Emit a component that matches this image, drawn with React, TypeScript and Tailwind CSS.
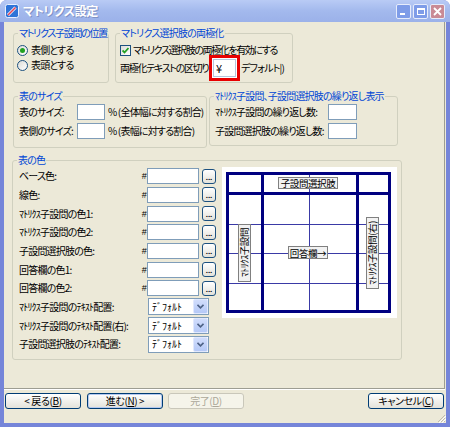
import React from 'react';

// 共通フォント（MS UI Gothic 風にプロポーショナルかなを使う）
const jp = "font-['Noto_Sans_CJK_JP',sans-serif] [font-feature-settings:'palt']";

function GroupBox({ title, titleClass = '', className = '', children }: { title: string; titleClass?: string; className?: string; children?: React.ReactNode }) {
  return (
    <div className={`border border-[#d0d0bf] rounded-[3px] ${className}`}>
      <div className={`-mt-[7px] ml-[4px] w-fit px-[1px] bg-[#ece9d8] text-[#0046d5] leading-[12px] whitespace-nowrap ${titleClass}`}>{title}</div>
      {children}
    </div>
  );
}

function Radio({ checked = false }: { checked?: boolean }) {
  return (
    <span className="w-[11px] h-[11px] shrink-0 rounded-full border border-[#1c5180] bg-linear-to-br from-[#dcdcd7] to-white flex items-center justify-center">
      {checked && <span className="w-[5px] h-[5px] rounded-full bg-[#21a121]" />}
    </span>
  );
}

function Checkbox() {
  return (
    <span className="w-[11px] h-[11px] shrink-0 border border-[#1c5180] bg-linear-to-br from-[#dcdcd7] to-white flex items-center justify-center">
      <svg width="7" height="7" viewBox="0 0 7 7">
        <path d="M0.5 3.5 L2.5 5.5 L6.5 1" fill="none" stroke="#21a121" strokeWidth="1.8" />
      </svg>
    </span>
  );
}

function TextBox({ className = '' }: { className?: string }) {
  return <div className={`h-[16px] border border-[#7f9db9] bg-white shrink-0 ${className}`} />;
}

function DotsButton() {
  return (
    <div className="ml-[3px] w-[14px] h-[15px] shrink-0 rounded-[3px] border border-[#1c5180] bg-linear-to-b from-white to-[#e3e2da] flex items-end justify-center pb-[2px]">
      <span className="text-[8px] leading-[6px] tracking-normal font-['Liberation_Sans',sans-serif] font-bold">...</span>
    </div>
  );
}

function Combo() {
  return (
    <div className="w-[61px] h-[17px] shrink-0 border border-[#7f9db9] bg-white flex items-center">
      <span className="flex-1 pl-[3px] leading-[12px] tracking-normal">ﾃﾞﾌｫﾙﾄ</span>
      <div className="w-[15px] h-[15px] rounded-[2px] border border-[#e0e8fe] bg-linear-to-b from-[#d1ddfc] to-[#b5c9f7] flex items-center justify-center">
        <svg width="7" height="5" viewBox="0 0 7 5">
          <path d="M0.5 0.8 L3.5 3.8 L6.5 0.8" fill="none" stroke="#4d6185" strokeWidth="1.6" />
        </svg>
      </div>
    </div>
  );
}

function ColorRow({ label }: { label: string }) {
  return (
    <div className="h-[18.67px] flex items-center pl-[6px]">
      <span className="flex-1 whitespace-nowrap">{label}</span>
      <span className="mr-[1px] font-['Liberation_Sans',sans-serif] text-[9px]">#</span>
      <TextBox className="w-[52px]" />
      <DotsButton />
    </div>
  );
}

function SelectRow({ label }: { label: string }) {
  return (
    <div className="h-[18.67px] flex items-center pl-[6px] pr-[7px]">
      <span className="flex-1 whitespace-nowrap">{label}</span>
      <Combo />
    </div>
  );
}

function WizButton({ children, disabled = false, focus = false, className = '' }: { children: React.ReactNode; disabled?: boolean; focus?: boolean; className?: string }) {
  const look = disabled
    ? 'border-[#c9c7ba] bg-[#f5f4ea] text-[#aca899]'
    : 'border-[#003c74] bg-linear-to-b from-white to-[#e3e2da] text-black';
  return (
    <div className={`w-[76px] h-[16px] shrink-0 rounded-[3px] border flex items-center justify-center whitespace-nowrap ${look} ${focus ? 'shadow-[inset_0_0_0_1px_#b4c9f0]' : ''} ${className}`}>
      {children}
    </div>
  );
}

function AppIcon() {
  return (
    <svg width="14" height="14" viewBox="0 0 14 14">
      <rect x="0.5" y="0.5" width="13" height="13" rx="2" fill="#2f74d8" stroke="#e8f0ff" />
      <path d="M3 11 L10.5 3.5" stroke="#ffffff" strokeWidth="3" />
      <path d="M3 11 L10.5 3.5" stroke="#e0455a" strokeWidth="1.6" />
    </svg>
  );
}

function CaptionButton({ kind }: { kind: 'min' | 'max' | 'close' }) {
  const bg = kind === 'close' ? 'bg-[#c98a95]' : 'bg-[#7e9ce8]';
  return (
    <div className={`w-[15px] h-[15px] rounded-[2px] border border-[#e6ecfb] ${bg} flex items-center justify-center`}>
      {kind === 'min' && <div className="w-[5px] h-[2px] bg-white mt-[6px] -ml-[3px]" />}
      {kind === 'max' && <div className="w-[8px] h-[7px] border border-white border-t-2" />}
      {kind === 'close' && (
        <svg width="9" height="9" viewBox="0 0 9 9">
          <path d="M1 1 L8 8 M8 1 L1 8" stroke="#fff" strokeWidth="1.8" />
        </svg>
      )}
    </div>
  );
}

// 表のプレビュー（線は SVG、ラベルは上に重ねる）
function TablePreview() {
  const navy = '#000080';
  const thin = '#3a3aa6';
  return (
    <div className="w-[175px] h-[151px] bg-white pt-[5px] pl-[4px] shrink-0">
      <div className="relative w-[165px] h-[141px] tracking-[-0.4px]">
        <svg width="165" height="141" className="block">
          <rect x="0" y="0" width="165" height="141" fill="#fff" />
          <rect x="83" y="3" width="1" height="135" fill={thin} />
          <rect x="3" y="52" width="159" height="1" fill={thin} />
          <rect x="3" y="81" width="159" height="1" fill={thin} />
          <rect x="3" y="111" width="159" height="1" fill={thin} />
          <rect x="0" y="0" width="165" height="3" fill={navy} />
          <rect x="0" y="138" width="165" height="3" fill={navy} />
          <rect x="0" y="0" width="3" height="141" fill={navy} />
          <rect x="162" y="0" width="3" height="141" fill={navy} />
          <rect x="35" y="0" width="3" height="141" fill={navy} />
          <rect x="130" y="0" width="3" height="141" fill={navy} />
          <rect x="0" y="20" width="165" height="3" fill={navy} />
        </svg>
        <div className="absolute left-[52px] top-[5px] h-[12px] w-[60px] border border-[#808080] bg-[#f2f2f2] flex items-center justify-center text-[9.5px] leading-[10px] whitespace-nowrap">子設問選択肢</div>
        <div className="absolute left-[62px] top-[74px] h-[13px] w-[40px] border border-[#808080] bg-[#f2f2f2] flex items-center justify-center text-[9.5px] leading-[10px] whitespace-nowrap">回答欄→</div>
        <div className="absolute left-[12px] top-[52px] w-[13px] h-[58px] border border-[#808080] bg-[#f2f2f2] flex items-center justify-center">
          <span className="[writing-mode:vertical-rl] [text-orientation:sideways] rotate-180 text-[9.5px] leading-[11px] whitespace-nowrap">ﾏﾄﾘｸｽ子設問</span>
        </div>
        <div className="absolute left-[140px] top-[45px] w-[13px] h-[72px] border border-[#808080] bg-[#f2f2f2] flex items-center justify-center">
          <span className="[writing-mode:vertical-rl] [text-orientation:sideways] rotate-180 text-[9.5px] leading-[11px] whitespace-nowrap">ﾏﾄﾘｸｽ子設問(右)</span>
        </div>
      </div>
    </div>
  );
}

export default function App() {
  return (
    <div className={`w-[450px] h-[427px] bg-[#7585d9] rounded-t-[7px] flex flex-col text-[10px] leading-[12px] tracking-[-0.8px] text-black ${jp}`}>
      {/* タイトルバー */}
      <div className="h-[22px] shrink-0 rounded-t-[7px] bg-linear-to-b from-[#b9cbf5] via-[#a3b9ed] to-[#9bb1e9] flex items-center pl-[5px] pr-[5px]">
        <AppIcon />
        <span className="ml-[4px] text-white font-bold text-[12px] leading-[14px] tracking-[-0.3px] [text-shadow:1px_1px_0_#7f92c6]">マトリクス設定</span>
        <div className="ml-auto flex gap-[2px]">
          <CaptionButton kind="min" />
          <CaptionButton kind="max" />
          <CaptionButton kind="close" />
        </div>
      </div>

      <div className="flex-1 flex px-[4px] pb-[4px]">
        <div className="flex-1 bg-[#ece9d8] flex flex-col">
          {/* 内容パネル */}
          <div className="h-[367px] w-[441px] shrink-0 border-r border-b border-[#9d9d92] shadow-[0_1px_0_#ffffff] flex flex-col">
            {/* 上段 */}
            <div className="flex items-start mt-[11px] ml-[9px]">
              <GroupBox title="マトリクス子設問の位置" titleClass="tracking-[-1.3px]" className="w-[96px] h-[50px]">
                <div className="flex items-center h-[14px] mt-[4px] pl-[3px]">
                  <Radio checked />
                  <span className="ml-[3px]">表側とする</span>
                </div>
                <div className="flex items-center h-[14px] mt-[1px] pl-[3px]">
                  <Radio />
                  <span className="ml-[3px]">表頭とする</span>
                </div>
              </GroupBox>
              <GroupBox title="マトリクス選択肢の両極化" className="ml-[6px] w-[178px] h-[50px]">
                <div className="flex items-center h-[14px] mt-[4px] pl-[4px]">
                  <Checkbox />
                  <span className="ml-[2px] whitespace-nowrap tracking-[-1.4px]">マトリクス選択肢の両極化を有効にする</span>
                </div>
                <div className="flex items-center -mt-[2px] pl-[4px]">
                  <span className="w-[89px] whitespace-nowrap tracking-[-1.3px]">両極化テキストの区切り</span>
                  <div className="w-[31px] h-[26px] border-[3px] border-[#e80000] bg-white p-[1px]">
                    <div className="h-full border border-[#b4c6dc] flex items-center pl-[2px] text-[11px]">¥</div>
                  </div>
                  <span className="ml-[1px] whitespace-nowrap">デフォルト|)</span>
                </div>
              </GroupBox>
            </div>

            {/* 中段 */}
            <div className="flex items-start mt-[13px] ml-[9px]">
              <GroupBox title="表のサイズ" className="w-[194px] h-[52px]">
                <div className="flex items-center h-[16px] mt-[2px] pl-[5px]">
                  <span className="w-[58px] whitespace-nowrap">表のサイズ:</span>
                  <TextBox className="w-[28px]" />
                  <span className="ml-[3px] whitespace-nowrap">% (全体幅に対する割合)</span>
                </div>
                <div className="flex items-center h-[16px] mt-[3px] pl-[5px]">
                  <span className="w-[58px] whitespace-nowrap">表側のサイズ:</span>
                  <TextBox className="w-[28px]" />
                  <span className="ml-[3px] whitespace-nowrap">% (表幅に対する割合)</span>
                </div>
              </GroupBox>
              <GroupBox title="ﾏﾄﾘｸｽ子設問、子設問選択肢の繰り返し表示" className="ml-[2px] w-[189px] h-[50px]">
                <div className="flex items-center h-[16px] mt-[2px] pl-[5px]">
                  <span className="w-[113px] whitespace-nowrap">ﾏﾄﾘｸｽ子設問の繰り返し数:</span>
                  <TextBox className="w-[29px]" />
                </div>
                <div className="flex items-center h-[16px] mt-[3px] pl-[5px]">
                  <span className="w-[113px] whitespace-nowrap">子設問選択肢の繰り返し数:</span>
                  <TextBox className="w-[29px]" />
                </div>
              </GroupBox>
            </div>

            {/* 下段 */}
            <GroupBox title="表の色" className="mt-[12px] ml-[8px] w-[390px] h-[200px]">
              <div className="flex mt-[1px]">
                <div className="w-[203px] flex flex-col">
                  <ColorRow label="ベース色:" />
                  <ColorRow label="線色:" />
                  <ColorRow label="ﾏﾄﾘｸｽ子設問の色1:" />
                  <ColorRow label="ﾏﾄﾘｸｽ子設問の色2:" />
                  <ColorRow label="子設問選択肢の色:" />
                  <ColorRow label="回答欄の色1:" />
                  <ColorRow label="回答欄の色2:" />
                  <SelectRow label="ﾏﾄﾘｸｽ子設問のﾃｷｽﾄ配置:" />
                  <SelectRow label="ﾏﾄﾘｸｽ子設問のﾃｷｽﾄ配置(右):" />
                  <SelectRow label="子設問選択肢のﾃｷｽﾄ配置:" />
                </div>
                <div className="ml-[6px]">
                  <TablePreview />
                </div>
              </div>
            </GroupBox>
          </div>

          {/* ボタンバー */}
          <div className="flex-1 flex flex-col">
            <div className="flex mt-[4px] pr-[2px] tracking-[-0.4px]">
              <WizButton className="ml-[1px]">&lt; 戻る(<u>B</u>)</WizButton>
              <WizButton focus className="ml-[6px]">進む(<u>N</u>) &gt;</WizButton>
              <WizButton disabled className="ml-[5px]">完了(<u>D</u>)</WizButton>
              <WizButton className="ml-auto">キャンセル(<u>C</u>)</WizButton>
            </div>
            <div className="mt-auto flex justify-end">
              <svg width="9" height="9" viewBox="0 0 9 9" className="block">
                <path d="M8 1 L1 8 M8 4 L4 8 M8 7 L7 8" stroke="#c0bcab" strokeWidth="1" />
                <path d="M9 2 L2 9 M9 5 L5 9" stroke="#ffffff" strokeWidth="1" />
              </svg>
            </div>
          </div>
        </div>
      </div>
    </div>
  );
}
